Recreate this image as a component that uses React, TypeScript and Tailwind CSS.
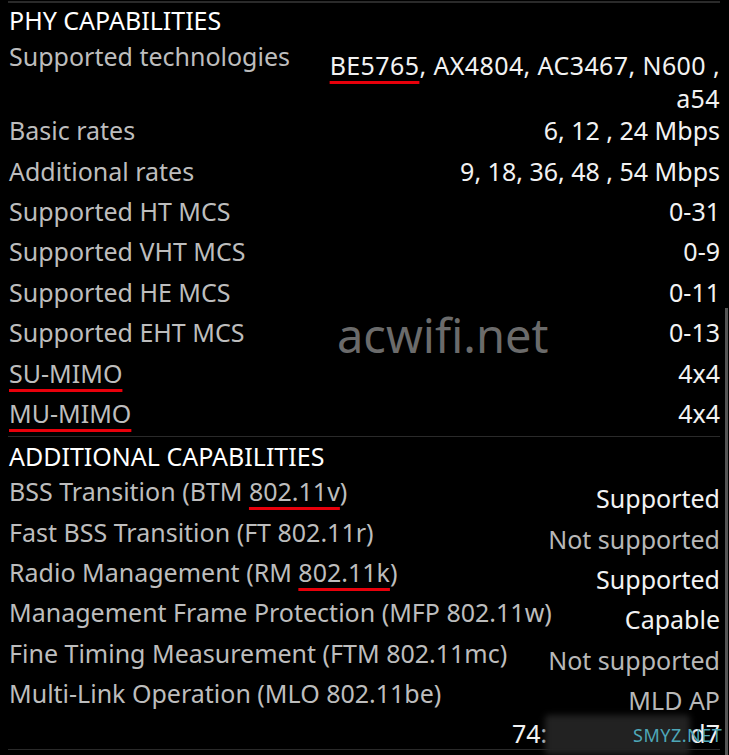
import { ReactNode } from "react"

const mark = "underline decoration-[#e8000b] decoration-[3px] underline-offset-[6px]"

const PhyRow = (props: { label: ReactNode, value: ReactNode }) => {
    return (
        <div className="flex h-[40.4px] items-center justify-between">
            <span className="text-[#bdbdbd]">{props.label}</span>
            <span className="text-[#f2f2f2]">{props.value}</span>
        </div>
    )
}

const CapRow = (props: { label: ReactNode, value: string, dim?: boolean }) => {
    return (
        <div className="flex h-[40.4px] items-start justify-between leading-[28px]">
            <span className="pt-[3px] text-[#bdbdbd]">{props.label}</span>
            <span className={`pt-[10px] ${props.dim ? 'text-[#b8b8b8]' : 'text-[#f2f2f2]'}`}>{props.value}</span>
        </div>
    )
}

const App = () => {
    return (
        <div className="relative h-[755px] w-[729px] overflow-hidden bg-black text-[25px] leading-[28px]" style={{ fontFamily: '"Noto Sans", "Open Sans", sans-serif' }}>
            <div className="ml-[8px] mr-[9px] mt-[1px] h-[2px] bg-[#2a2a2a]" />
            <div className="pl-[9px] pr-[9px]">
                <div className="flex h-[33px] items-center text-white">PHY CAPABILITIES</div>
                <div className="flex h-[74px] items-start justify-between">
                    <span className="pt-[6px] text-[#bdbdbd]">Supported technologies</span>
                    <span className="pt-[13px] text-right leading-[33px] tracking-[0.4px] text-[#f2f2f2]">
                        <span className={mark}>BE5765</span>, AX4804, AC3467, N600 ,<br />a54
                    </span>
                </div>
                <PhyRow label="Basic rates" value="6, 12 , 24 Mbps" />
                <PhyRow label="Additional rates" value="9, 18, 36, 48 , 54 Mbps" />
                <PhyRow label="Supported HT MCS" value="0-31" />
                <PhyRow label="Supported VHT MCS" value="0-9" />
                <PhyRow label="Supported HE MCS" value="0-11" />
                <PhyRow label="Supported EHT MCS" value="0-13" />
                <PhyRow label={<span className={mark}>SU-MIMO</span>} value="4x4" />
                <PhyRow label={<span className={mark}>MU-MIMO</span>} value="4x4" />
            </div>
            <div className="ml-[8px] mr-[9px] mt-[3px] h-[1px] bg-[#2a2a2a]" />
            <div className="pl-[9px] pr-[9px]">
                <div className="flex h-[37px] items-center text-white">ADDITIONAL CAPABILITIES</div>
                <CapRow label={<>BSS Transition (BTM <span className={mark}>802.11v</span>)</>} value="Supported" />
                <CapRow label="Fast BSS Transition (FT 802.11r)" value="Not supported" dim />
                <CapRow label={<>Radio Management (RM <span className={mark}>802.11k</span>)</>} value="Supported" />
                <CapRow label="Management Frame Protection (MFP 802.11w)" value="Capable" />
                <CapRow label="Fine Timing Measurement (FTM 802.11mc)" value="Not supported" dim />
                <CapRow label="Multi-Link Operation (MLO 802.11be)" value="MLD AP" dim />
                <div className="flex h-[33px] items-center justify-end text-[#f2f2f2]">
                    <span>74:</span>
                    <span className="w-[143px]" />
                    <span>d7</span>
                </div>
            </div>
            <div className="ml-[8px] mr-[9px] h-[1px] bg-[#2a2a2a]" />

            {/* blurred MAC + watermarks */}
            <div className="absolute left-[545px] top-[715px] h-[40px] w-[145px] rounded-sm bg-[#222] blur-[3px]" />
            <div className="absolute left-[633px] top-[723px] text-[18px] leading-[24px] tracking-[0.5px] text-[#4ea7b8]">SMYZ.NET</div>
            <div className="absolute left-[337px] top-[305px] text-[47px] leading-[60px] text-[#6b6b6b]">acwifi.net</div>
            <div className="absolute right-[1px] top-[308px] h-[447px] w-[3px] bg-[#555]" />
        </div>
    )
}

export default App
